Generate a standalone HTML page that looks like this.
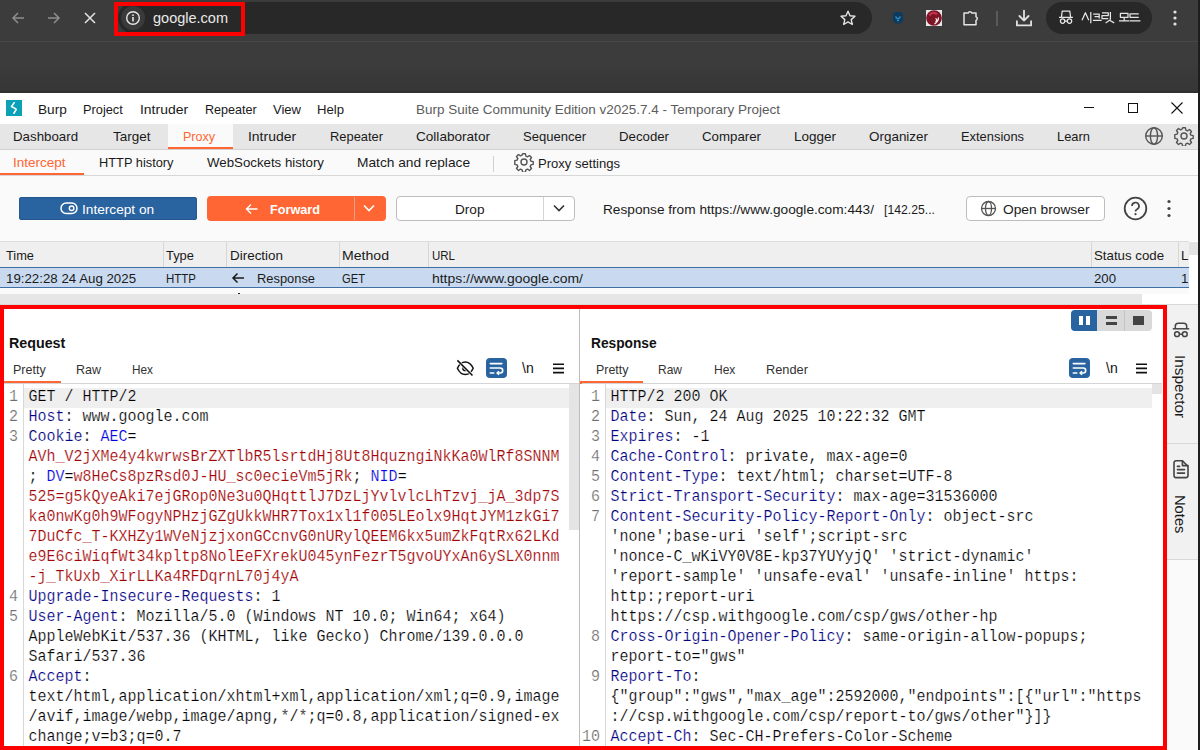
<!DOCTYPE html><html><head><meta charset="utf-8"><title>Burp Suite</title><style>
html,body{margin:0;padding:0;width:1200px;height:750px;overflow:hidden;background:#fafafa;font-family:'Liberation Sans',sans-serif}
.t{position:absolute;white-space:pre}
</style></head><body>
<div style="position:absolute;left:0px;top:0px;width:1200px;height:93px;background:#3c3c3c;"></div>
<div style="position:absolute;left:0px;top:41px;width:1200px;height:1px;background:#474747;"></div>
<div style="position:absolute;left:0px;top:62px;width:1200px;height:29px;background:linear-gradient(#3c3c3c,#363636);"></div>
<div style="position:absolute;left:0px;top:91px;width:1200px;height:2px;background:#303030;"></div>
<div style="position:absolute;left:118px;top:2px;width:754px;height:32px;background:#282828;border-radius:16px;"></div>
<div style="position:absolute;left:121px;top:6px;width:24px;height:24px;border-radius:12px;background:#3a3a3a"></div>
<svg style="position:absolute;left:125px;top:10px;" width="16" height="16" viewBox="0 0 16 16"><circle cx="8" cy="8" r="6.3" fill="none" stroke="#e6e6e6" stroke-width="1.4"/><rect x="7.2" y="7" width="1.6" height="4.5" fill="#e6e6e6"/><rect x="7.2" y="4.4" width="1.6" height="1.6" fill="#e6e6e6"/></svg>
<div class="t" style="left:152.90px;top:10.93px;font-size:14.5px;line-height:14.5px;color:#e8e8e8;font-weight:normal;transform-origin:0 0;transform:scaleX(1.0005);">google.com</div>
<div style="position:absolute;left:114px;top:2px;width:123px;height:26px;border:4px solid #ff0000"></div>
<svg style="position:absolute;left:10px;top:10px;" width="16" height="16" viewBox="0 0 16 16"><path d="M14 8H3M8 3L3 8l5 5" fill="none" stroke="#8d8d8d" stroke-width="1.5"/></svg>
<svg style="position:absolute;left:46px;top:10px;" width="16" height="16" viewBox="0 0 16 16"><path d="M2 8h11M8 3l5 5-5 5" fill="none" stroke="#8d8d8d" stroke-width="1.5"/></svg>
<svg style="position:absolute;left:82px;top:10px;" width="16" height="16" viewBox="0 0 16 16"><path d="M3 3l10 10M13 3L3 13" fill="none" stroke="#e3e3e3" stroke-width="1.5"/></svg>
<svg style="position:absolute;left:839px;top:9px;" width="18" height="18" viewBox="0 0 18 18"><path d="M9 2.2l2 4.6 5 .5-3.8 3.3 1.1 4.9L9 12.9l-4.3 2.6 1.1-4.9L2 7.3l5-.5z" fill="none" stroke="#e3e3e3" stroke-width="1.4" stroke-linejoin="round"/></svg>
<svg style="position:absolute;left:890px;top:10px;" width="16" height="16" viewBox="0 0 16 16"><path d="M3 3.5L5.5 2H10.5L13 3.5V11L10.5 13.5H5.5L3 11Z" fill="#0d3b5e"/><path d="M5.5 6.5L7 8.5H9L10.5 6.5M7 10.5H9" fill="none" stroke="#2f87c0" stroke-width="1.3"/></svg>
<svg style="position:absolute;left:925px;top:9px;" width="18" height="18" viewBox="0 0 18 18"><rect x="1" y="1" width="16" height="16" fill="#e8e8e8"/><circle cx="9" cy="9" r="7.8" fill="#7e1424"/><path d="M4.5 6.5C6 3.5 10 3 12 5.5" fill="none" stroke="#c2324e" stroke-width="2.2"/><path d="M13.5 8.5C13.5 12 11 14 9.5 15M10.5 9.5C12 10 12 12 10.5 13" fill="none" stroke="#f4f4f4" stroke-width="1.3"/></svg>
<svg style="position:absolute;left:961px;top:9px;" width="18" height="18" viewBox="0 0 18 18"><path d="M3 4H7.2A1.9 1.9 0 0 1 10.8 4H15V7.8A1.9 1.9 0 0 1 15 11.4V15.8H3V11.4A0 0 0 0 0 3 11.4Z" fill="none" stroke="#e3e3e3" stroke-width="1.5" stroke-linejoin="round"/></svg>
<div style="position:absolute;left:996px;top:11px;width:1.5px;height:15px;background:#5a5a5a;"></div>
<svg style="position:absolute;left:1014px;top:8px;" width="20" height="20" viewBox="0 0 20 20"><path d="M10 2.6V12.5M5.4 8L10 12.6L14.6 8M2.9 13.2V17.4H17.1V13.2" fill="none" stroke="#e0e0e0" stroke-width="1.8" stroke-linecap="round" stroke-linejoin="round"/></svg>
<div style="position:absolute;left:1046px;top:2px;width:106px;height:32px;background:#282828;border-radius:16px;"></div>
<svg style="position:absolute;left:1050px;top:4px;" width="100" height="28" viewBox="0 0 100 28"><g fill="none" stroke="#e6e6e6" stroke-width="1.25" stroke-linejoin="round"><path d="M9 13.3H22.9M11.4 13.3L12.2 7.2H19.8L20.6 13.3"/><circle cx="12.6" cy="17.1" r="2.2"/><circle cx="19.5" cy="17.1" r="2.2"/><path d="M14.8 17.1H17.3"/><path d="M32 16.25L35.4 8.75L38.75 16.25M40.8 8V19.2"/><path d="M43.2 10.2H49.2V14.6M44.5 12.5H49M42.9 16.25H51.7"/><path d="M52 8.75H58.3V11.6H52V14.6H58.3M60.4 8V15.8M55.6 18.9L59.6 16.25L64.2 18.9"/><path d="M70.4 9.3H78V13.3H70.4ZM74.2 13.3V16.9M69 16.9H79.2"/><path d="M88.75 9.8H80V13.3H88.75M79.6 16.9H90.4"/></g></svg>
<svg style="position:absolute;left:1169px;top:9px;" width="12" height="18" viewBox="0 0 12 18"><circle cx="6" cy="3" r="1.6" fill="#e3e3e3"/><circle cx="6" cy="9" r="1.6" fill="#e3e3e3"/><circle cx="6" cy="15" r="1.6" fill="#e3e3e3"/></svg>
<div style="position:absolute;left:0px;top:93px;width:1200px;height:31px;background:#ffffff;"></div>
<svg style="position:absolute;left:6px;top:100px;" width="16" height="16" viewBox="0 0 16 16"><rect width="16" height="16" fill="#0ca1b6"/><path d="M8.2 2.6L5.4 6.6L7.8 7.7L10.3 9.4L7.9 13.2" fill="none" stroke="#ffffff" stroke-width="1.6" stroke-linejoin="round" stroke-linecap="round"/></svg>
<div class="t" style="left:38.25px;top:103.00px;font-size:13px;line-height:13px;color:#1a1a1a;font-weight:normal;transform-origin:0 0;transform:scaleX(1.0481);">Burp</div>
<div class="t" style="left:83.25px;top:103.00px;font-size:13px;line-height:13px;color:#1a1a1a;font-weight:normal;transform-origin:0 0;transform:scaleX(0.9832);">Project</div>
<div class="t" style="left:139.50px;top:103.00px;font-size:13px;line-height:13px;color:#1a1a1a;font-weight:normal;transform-origin:0 0;transform:scaleX(1.0718);">Intruder</div>
<div class="t" style="left:204.50px;top:103.00px;font-size:13px;line-height:13px;color:#1a1a1a;font-weight:normal;transform-origin:0 0;transform:scaleX(0.9674);">Repeater</div>
<div class="t" style="left:273.00px;top:103.00px;font-size:13px;line-height:13px;color:#1a1a1a;font-weight:normal;transform-origin:0 0;transform:scaleX(1.0018);">View</div>
<div class="t" style="left:317.00px;top:103.00px;font-size:13px;line-height:13px;color:#1a1a1a;font-weight:normal;transform-origin:0 0;transform:scaleX(1.0107);">Help</div>
<div class="t" style="left:416.00px;top:103.00px;font-size:13px;line-height:13px;color:#5c5c5c;font-weight:normal;transform-origin:0 0;transform:scaleX(1.0372);">Burp Suite Community Edition v2025.7.4 - Temporary Project</div>
<div style="position:absolute;left:1084px;top:107px;width:10px;height:1px;background:#111;"></div>
<div style="position:absolute;left:1128px;top:102.5px;width:8px;height:8px;border:1.2px solid #111"></div>
<svg style="position:absolute;left:1170px;top:101px;" width="14" height="14" viewBox="0 0 14 14"><path d="M1.5 1.5l11 11M12.5 1.5l-11 11" stroke="#111" stroke-width="1.1"/></svg>
<div style="position:absolute;left:0px;top:124px;width:1200px;height:25px;background:#e6e6e6;"></div>
<div style="position:absolute;left:0px;top:149px;width:1200px;height:1px;background:#d2d2d2;"></div>
<div style="position:absolute;left:168px;top:124px;width:65px;height:25px;background:#fafafa;"></div>
<div style="position:absolute;left:168px;top:147px;width:65px;height:2px;background:#ff6633;"></div>
<div class="t" style="left:13.25px;top:130.00px;font-size:13px;line-height:13px;color:#1a1a1a;font-weight:normal;transform-origin:0 0;transform:scaleX(1.0225);">Dashboard</div>
<div class="t" style="left:112.50px;top:130.00px;font-size:13px;line-height:13px;color:#1a1a1a;font-weight:normal;transform-origin:0 0;transform:scaleX(1.0376);">Target</div>
<div class="t" style="left:183.00px;top:130.00px;font-size:13px;line-height:13px;color:#ff6633;font-weight:normal;transform-origin:0 0;transform:scaleX(0.9634);">Proxy</div>
<div class="t" style="left:248.25px;top:130.00px;font-size:13px;line-height:13px;color:#1a1a1a;font-weight:normal;transform-origin:0 0;transform:scaleX(1.0718);">Intruder</div>
<div class="t" style="left:330.00px;top:130.00px;font-size:13px;line-height:13px;color:#1a1a1a;font-weight:normal;transform-origin:0 0;transform:scaleX(0.9907);">Repeater</div>
<div class="t" style="left:416.00px;top:130.00px;font-size:13px;line-height:13px;color:#1a1a1a;font-weight:normal;transform-origin:0 0;transform:scaleX(1.0445);">Collaborator</div>
<div class="t" style="left:523.00px;top:130.00px;font-size:13px;line-height:13px;color:#1a1a1a;font-weight:normal;transform-origin:0 0;transform:scaleX(1.0023);">Sequencer</div>
<div class="t" style="left:619.00px;top:130.00px;font-size:13px;line-height:13px;color:#1a1a1a;font-weight:normal;transform-origin:0 0;transform:scaleX(1.0175);">Decoder</div>
<div class="t" style="left:702.00px;top:130.00px;font-size:13px;line-height:13px;color:#1a1a1a;font-weight:normal;transform-origin:0 0;transform:scaleX(1.0210);">Comparer</div>
<div class="t" style="left:794.00px;top:130.00px;font-size:13px;line-height:13px;color:#1a1a1a;font-weight:normal;transform-origin:0 0;transform:scaleX(1.0372);">Logger</div>
<div class="t" style="left:869.00px;top:130.00px;font-size:13px;line-height:13px;color:#1a1a1a;font-weight:normal;transform-origin:0 0;transform:scaleX(1.0338);">Organizer</div>
<div class="t" style="left:961.00px;top:130.00px;font-size:13px;line-height:13px;color:#1a1a1a;font-weight:normal;transform-origin:0 0;transform:scaleX(0.9910);">Extensions</div>
<div class="t" style="left:1057.00px;top:130.00px;font-size:13px;line-height:13px;color:#1a1a1a;font-weight:normal;transform-origin:0 0;transform:scaleX(0.9916);">Learn</div>
<svg style="position:absolute;left:1144px;top:126px;" width="20" height="20" viewBox="0 0 20 20"><g fill="none" stroke="#555" stroke-width="1.4"><circle cx="10" cy="10" r="8.3"/><ellipse cx="10" cy="10" rx="3.6" ry="8.3"/><path d="M1.7 10h16.6"/></g></svg>
<svg style="position:absolute;left:1174px;top:126px;" width="20" height="20" viewBox="0 0 20 20"><g fill="none" stroke="#555" stroke-width="1.4"><path d="M8.6 1.8h2.8l.5 2.3 1.6.7 2-1.3 2 2-1.3 2 .7 1.6 2.3.5v2.8l-2.3.5-.7 1.6 1.3 2-2 2-2-1.3-1.6.7-.5 2.3H8.6l-.5-2.3-1.6-.7-2 1.3-2-2 1.3-2-.7-1.6-2.3-.5V8.6l2.3-.5.7-1.6-1.3-2 2-2 2 1.3 1.6-.7z" stroke-linejoin="round"/><circle cx="10" cy="10" r="3"/></g></svg>
<div style="position:absolute;left:0px;top:150px;width:1200px;height:25px;background:#fafafa;"></div>
<div style="position:absolute;left:0px;top:175px;width:1200px;height:1px;background:#d8d8d8;"></div>
<div style="position:absolute;left:0px;top:173px;width:84px;height:2px;background:#ff6633;"></div>
<div class="t" style="left:13.25px;top:156.00px;font-size:13px;line-height:13px;color:#ff6633;font-weight:normal;transform-origin:0 0;transform:scaleX(1.0382);">Intercept</div>
<div class="t" style="left:99.25px;top:156.00px;font-size:13px;line-height:13px;color:#1a1a1a;font-weight:normal;transform-origin:0 0;transform:scaleX(0.9855);">HTTP history</div>
<div class="t" style="left:207.00px;top:156.00px;font-size:13px;line-height:13px;color:#1a1a1a;font-weight:normal;transform-origin:0 0;transform:scaleX(1.0204);">WebSockets history</div>
<div class="t" style="left:357.00px;top:156.00px;font-size:13px;line-height:13px;color:#1a1a1a;font-weight:normal;transform-origin:0 0;transform:scaleX(1.0568);">Match and replace</div>
<div class="t" style="left:538.00px;top:156.50px;font-size:13px;line-height:13px;color:#1a1a1a;font-weight:normal;transform-origin:0 0;transform:scaleX(1.0044);">Proxy settings</div>
<div style="position:absolute;left:493px;top:156px;width:1px;height:16px;background:#d0d0d0;"></div>
<svg style="position:absolute;left:514px;top:152px;" width="20" height="20" viewBox="0 0 20 20"><g fill="none" stroke="#555" stroke-width="1.4"><path d="M8.6 1.8h2.8l.5 2.3 1.6.7 2-1.3 2 2-1.3 2 .7 1.6 2.3.5v2.8l-2.3.5-.7 1.6 1.3 2-2 2-2-1.3-1.6.7-.5 2.3H8.6l-.5-2.3-1.6-.7-2 1.3-2-2 1.3-2-.7-1.6-2.3-.5V8.6l2.3-.5.7-1.6-1.3-2 2-2 2 1.3 1.6-.7z" stroke-linejoin="round"/><circle cx="10" cy="10" r="3"/></g></svg>
<div style="position:absolute;left:0px;top:176px;width:1200px;height:65px;background:#fafafa;"></div>
<div style="position:absolute;left:18.5px;top:196.5px;width:176px;height:21.5px;background:#2a64a0;border:1px solid #25578c;border-radius:2px"></div>
<svg style="position:absolute;left:60px;top:202px;" width="18" height="13" viewBox="0 0 18 13"><rect x="1" y="1" width="16" height="10.5" rx="5.25" fill="none" stroke="#fff" stroke-width="1.5"/><circle cx="11.6" cy="6.25" r="2.3" fill="none" stroke="#fff" stroke-width="1.4"/></svg>
<div class="t" style="left:81.90px;top:203.20px;font-size:13px;line-height:13px;color:#ffffff;font-weight:normal;transform-origin:0 0;transform:scaleX(1.0504);">Intercept on</div>
<div style="position:absolute;left:207px;top:196px;width:179px;height:25px;background:#ff6633;border-radius:4px"></div>
<div style="position:absolute;left:354px;top:197px;width:1px;height:23px;background:#d9a692;"></div>
<svg style="position:absolute;left:244px;top:201px;" width="16" height="16" viewBox="0 0 16 16"><path d="M13.5 8H2.5M7 3.5L2.5 8L7 12.5" fill="none" stroke="#fff" stroke-width="1.4"/></svg>
<div class="t" style="left:270.00px;top:203.20px;font-size:13px;line-height:13px;color:#ffffff;font-weight:bold;transform-origin:0 0;transform:scaleX(0.9749);">Forward</div>
<svg style="position:absolute;left:361px;top:201px;" width="16" height="14" viewBox="0 0 16 14"><path d="M3 4.5l5 5 5-5" fill="none" stroke="#fff" stroke-width="1.6"/></svg>
<div style="position:absolute;left:396px;top:196px;width:177px;height:23px;background:#ffffff;border:1px solid #bdbdbd;border-radius:4px"></div>
<div style="position:absolute;left:543px;top:197px;width:1px;height:23px;background:#d4d4d4;"></div>
<div class="t" style="left:455.00px;top:203.20px;font-size:13px;line-height:13px;color:#1a1a1a;font-weight:normal;transform-origin:0 0;transform:scaleX(1.0457);">Drop</div>
<svg style="position:absolute;left:551px;top:201px;" width="16" height="14" viewBox="0 0 16 14"><path d="M3 4.5l5 5 5-5" fill="none" stroke="#333" stroke-width="1.6"/></svg>
<div class="t" style="left:603.00px;top:203.20px;font-size:13px;line-height:13px;color:#1a1a1a;font-weight:normal;transform-origin:0 0;transform:scaleX(1.0504);">Response from https://www.google.com:443/</div>
<div class="t" style="left:884.00px;top:203.20px;font-size:13px;line-height:13px;color:#1a1a1a;font-weight:normal;transform-origin:0 0;transform:scaleX(0.9408);">[142.25...</div>
<div style="position:absolute;left:965.5px;top:196.3px;width:137px;height:22.5px;background:#ffffff;border:1px solid #bdbdbd;border-radius:4px"></div>
<svg style="position:absolute;left:980px;top:200px;" width="17" height="17" viewBox="0 0 17 17"><g fill="none" stroke="#555" stroke-width="1.3"><circle cx="8.5" cy="8.5" r="7"/><ellipse cx="8.5" cy="8.5" rx="3" ry="7"/><path d="M1.5 8.5h14"/></g></svg>
<div class="t" style="left:1003.00px;top:203.20px;font-size:13px;line-height:13px;color:#1a1a1a;font-weight:normal;transform-origin:0 0;transform:scaleX(1.0595);">Open browser</div>
<svg style="position:absolute;left:1123px;top:196px;" width="25" height="25" viewBox="0 0 25 25"><circle cx="12.5" cy="12.5" r="10.8" fill="none" stroke="#444" stroke-width="1.8"/><path d="M9 10a3.5 3.5 0 1 1 5 3.2c-1 .5-1.5 1-1.5 2.3" fill="none" stroke="#444" stroke-width="1.7"/><circle cx="12.5" cy="18.2" r="1.1" fill="#444"/></svg>
<svg style="position:absolute;left:1163px;top:199px;" width="12" height="20" viewBox="0 0 12 20"><circle cx="6" cy="2.5" r="1.6" fill="#444"/><circle cx="6" cy="9.5" r="1.6" fill="#444"/><circle cx="6" cy="16.5" r="1.6" fill="#444"/></svg>
<div style="position:absolute;left:0px;top:241px;width:1189px;height:1px;background:#dcdcdc;"></div>
<div style="position:absolute;left:0px;top:242px;width:1189px;height:25px;background:#efefef;"></div>
<div style="position:absolute;left:162.5px;top:242px;width:1px;height:25px;background:#d6d6d6;"></div>
<div style="position:absolute;left:226px;top:242px;width:1px;height:25px;background:#d6d6d6;"></div>
<div style="position:absolute;left:338.5px;top:242px;width:1px;height:25px;background:#d6d6d6;"></div>
<div style="position:absolute;left:428px;top:242px;width:1px;height:25px;background:#d6d6d6;"></div>
<div style="position:absolute;left:1090.5px;top:242px;width:1px;height:25px;background:#d6d6d6;"></div>
<div style="position:absolute;left:1178px;top:242px;width:1px;height:25px;background:#d6d6d6;"></div>
<div class="t" style="left:6.00px;top:249.00px;font-size:13px;line-height:13px;color:#1a1a1a;font-weight:normal;transform-origin:0 0;transform:scaleX(0.9857);">Time</div>
<div class="t" style="left:166.00px;top:249.00px;font-size:13px;line-height:13px;color:#1a1a1a;font-weight:normal;transform-origin:0 0;transform:scaleX(0.9926);">Type</div>
<div class="t" style="left:230.00px;top:249.00px;font-size:13px;line-height:13px;color:#1a1a1a;font-weight:normal;transform-origin:0 0;transform:scaleX(1.0334);">Direction</div>
<div class="t" style="left:342.00px;top:249.00px;font-size:13px;line-height:13px;color:#1a1a1a;font-weight:normal;transform-origin:0 0;transform:scaleX(1.0841);">Method</div>
<div class="t" style="left:432.00px;top:249.00px;font-size:13px;line-height:13px;color:#1a1a1a;font-weight:normal;transform-origin:0 0;transform:scaleX(0.8846);">URL</div>
<div class="t" style="left:1094.00px;top:249.00px;font-size:13px;line-height:13px;color:#1a1a1a;font-weight:normal;transform-origin:0 0;transform:scaleX(1.0198);">Status code</div>
<div class="t" style="left:1181px;top:249.04px;font-size:13.3px;line-height:13.3px;color:#1a1a1a;font-weight:normal;font-family:'Liberation Sans', sans-serif;">Length</div>
<div style="position:absolute;left:1189px;top:241px;width:11px;height:64px;background:#ffffff;"></div>
<div style="position:absolute;left:1189px;top:242px;width:10px;height:13px;background:#e3e3e3;"></div>
<div style="position:absolute;left:1199px;top:241px;width:1px;height:64px;background:#d8d8d8;"></div>
<div style="position:absolute;left:0px;top:267px;width:1189px;height:1px;background:#3f6fa5;"></div>
<div style="position:absolute;left:0px;top:268px;width:1189px;height:19px;background:#c9daf0;"></div>
<div style="position:absolute;left:0px;top:287px;width:1189px;height:1px;background:#3f6fa5;"></div>
<div class="t" style="left:6.00px;top:272.00px;font-size:13px;line-height:13px;color:#1a1a1a;font-weight:normal;transform-origin:0 0;transform:scaleX(1.0220);">19:22:28 24 Aug 2025</div>
<div class="t" style="left:166.00px;top:272.00px;font-size:13px;line-height:13px;color:#1a1a1a;font-weight:normal;transform-origin:0 0;transform:scaleX(0.8842);">HTTP</div>
<div class="t" style="left:257.00px;top:272.00px;font-size:13px;line-height:13px;color:#1a1a1a;font-weight:normal;transform-origin:0 0;transform:scaleX(0.9904);">Response</div>
<div class="t" style="left:342.00px;top:272.00px;font-size:13px;line-height:13px;color:#1a1a1a;font-weight:normal;transform-origin:0 0;transform:scaleX(0.8609);">GET</div>
<div class="t" style="left:432.00px;top:272.00px;font-size:13px;line-height:13px;color:#1a1a1a;font-weight:normal;transform-origin:0 0;transform:scaleX(1.0715);">https://www.google.com/</div>
<div class="t" style="left:1094.00px;top:272.00px;font-size:13px;line-height:13px;color:#1a1a1a;font-weight:normal;transform-origin:0 0;transform:scaleX(1.0134);">200</div>
<div class="t" style="left:1181px;top:271.74px;font-size:13.3px;line-height:13.3px;color:#1a1a1a;font-weight:normal;font-family:'Liberation Sans', sans-serif;">1</div>
<svg style="position:absolute;left:230px;top:270px;" width="16" height="16" viewBox="0 0 16 16"><path d="M14 8H3M7.5 3.5L3 8l4.5 4.5" fill="none" stroke="#1a1a1a" stroke-width="1.5"/></svg>
<div style="position:absolute;left:0px;top:288px;width:1189px;height:6px;background:#fafafa;"></div>
<div style="position:absolute;left:0px;top:294px;width:1142px;height:10px;background:#e6e6e6;"></div>
<div style="position:absolute;left:1142px;top:294px;width:47px;height:10px;background:#ffffff;"></div>
<div style="position:absolute;left:0px;top:304px;width:1200px;height:1px;background:#d8d8d8;"></div>
<div style="position:absolute;left:238px;top:292.5px;width:2px;height:1.5px;background:#222;"></div>
<div style="position:absolute;left:0px;top:305px;width:1167px;height:445px;background:#ffffff;"></div>
<div style="position:absolute;left:579px;top:305px;width:1px;height:445px;background:#bdbdbd;"></div>
<style>.c{font-family:"Liberation Mono",monospace;font-size:15px;line-height:15px;transform:scaleY(1.15);transform-origin:0 11.5px;-webkit-text-stroke:0.2px #fff}</style>
<div class="t" style="left:8.70px;top:336.35px;font-size:14px;line-height:14px;color:#111;font-weight:bold;transform-origin:0 0;transform:scaleX(1.0194);">Request</div>
<div class="t" style="left:13.30px;top:364.16px;font-size:12.8px;line-height:12.8px;color:#333;font-weight:normal;transform-origin:0 0;transform:scaleX(0.9788);">Pretty</div>
<div class="t" style="left:76.00px;top:364.16px;font-size:12.8px;line-height:12.8px;color:#333;font-weight:normal;transform-origin:0 0;transform:scaleX(0.9741);">Raw</div>
<div class="t" style="left:132.00px;top:364.16px;font-size:12.8px;line-height:12.8px;color:#333;font-weight:normal;transform-origin:0 0;transform:scaleX(0.9217);">Hex</div>
<div style="position:absolute;left:0px;top:381px;width:61px;height:2.5px;background:#ff6633;"></div>
<div style="position:absolute;left:0px;top:383px;width:579px;height:1px;background:#d4d4d4;"></div>
<svg style="position:absolute;left:455px;top:358px;" width="20" height="20" viewBox="0 0 20 20"><defs><clipPath id="ce"><path d="M0 0L20 20H0Z"/></clipPath></defs><g fill="none" stroke="#111" stroke-width="1.5"><path d="M2.4 10.2C4.4 6 7.4 4 10.3 4C13.2 4 16.2 6 18.2 10.2C16.2 14.5 13.2 16.5 10.3 16.5C7.4 16.5 4.4 14.5 2.4 10.2Z"/><circle cx="10.3" cy="10.2" r="2.4" clip-path="url(#ce)"/></g><path d="M2.2 2.2L17.6 17.6" stroke="#fff" stroke-width="2.8"/><path d="M2.4 2.4L17.5 17.5" stroke="#111" stroke-width="1.5"/></svg>
<div style="position:absolute;left:486px;top:358px;width:21px;height:20px;background:#2a64a0;border-radius:4px"></div>
<svg style="position:absolute;left:486px;top:358px;" width="21" height="20" viewBox="0 0 21 20"><g fill="none" stroke="#fff" stroke-width="1.6" stroke-linecap="round"><path d="M4.3 5.6H15.9M4.3 10H14.2A2.5 2.5 0 0 1 14.2 15H11.6M4.3 15H7.8"/><path d="M13 13.2L11.2 15L13 16.8" stroke-linecap="butt"/></g></svg>
<div class="t" style="left:522px;top:361.15px;font-size:14px;line-height:14px;color:#111;font-weight:normal;font-family:'Liberation Sans', sans-serif;">\n</div>
<svg style="position:absolute;left:552px;top:362px;" width="13" height="13" viewBox="0 0 13 13"><path d="M1 2.2h11M1 6.4h11M1 10.6h11" stroke="#111" stroke-width="1.6"/></svg>
<div style="position:absolute;left:22.5px;top:384px;width:1px;height:362px;background:#d8d8d8;"></div>
<div style="position:absolute;left:23.5px;top:387.5px;width:545.5px;height:20.5px;background:#efefef;"></div>
<div style="position:absolute;left:569px;top:384px;width:10px;height:146px;background:#e4e4e4;"></div>
<div class="t" style="left:9.0px;top:389.50px;font-size:15px;line-height:15px;color:#6e6e6e;font-weight:normal;font-family:'Liberation Mono', monospace;transform:scaleY(1.15);transform-origin:0 11.5px;-webkit-text-stroke:0.2px #fff">1</div>
<div class="t c" style="left:28.5px;top:389.50px"><span style="color:#000000">GET / HTTP/2</span></div>
<div class="t" style="left:9.0px;top:409.50px;font-size:15px;line-height:15px;color:#6e6e6e;font-weight:normal;font-family:'Liberation Mono', monospace;transform:scaleY(1.15);transform-origin:0 11.5px;-webkit-text-stroke:0.2px #fff">2</div>
<div class="t c" style="left:28.5px;top:409.50px"><span style="color:#000080">Host</span><span style="color:#000000">: www.google.com</span></div>
<div class="t" style="left:9.0px;top:429.50px;font-size:15px;line-height:15px;color:#6e6e6e;font-weight:normal;font-family:'Liberation Mono', monospace;transform:scaleY(1.15);transform-origin:0 11.5px;-webkit-text-stroke:0.2px #fff">3</div>
<div class="t c" style="left:28.5px;top:429.50px"><span style="color:#000080">Cookie</span><span style="color:#000000">: </span><span style="color:#0000e0">AEC</span><span style="color:#000000">=</span></div>
<div class="t c" style="left:28.5px;top:449.50px"><span style="color:#a00000">AVh_V2jXMe4y4kwrwsBrZXTlbR5lsrtdHj8Ut8HquzngiNkKa0WlRf8SNNM</span></div>
<div class="t c" style="left:28.5px;top:469.50px"><span style="color:#000000">; </span><span style="color:#0000e0">DV</span><span style="color:#000000">=</span><span style="color:#a00000">w8HeCs8pzRsd0J-HU_sc0ecieVm5jRk</span><span style="color:#000000">; </span><span style="color:#0000e0">NID</span><span style="color:#000000">=</span></div>
<div class="t c" style="left:28.5px;top:489.50px"><span style="color:#a00000">525=g5kQyeAki7ejGRop0Ne3u0QHqttlJ7DzLjYvlvlcLhTzvj_jA_3dp7S</span></div>
<div class="t c" style="left:28.5px;top:509.50px"><span style="color:#a00000">ka0nwKg0h9WFogyNPHzjGZgUkkWHR7Tox1xl1f005LEolx9HqtJYM1zkGi7</span></div>
<div class="t c" style="left:28.5px;top:529.50px"><span style="color:#a00000">7DuCfc_T-KXHZy1WVeNjzjxonGCcnvG0nURylQEEM6kx5umZkFqtRx62LKd</span></div>
<div class="t c" style="left:28.5px;top:549.50px"><span style="color:#a00000">e9E6ciWiqfWt34kpltp8NolEeFXrekU045ynFezrT5gvoUYxAn6ySLX0nnm</span></div>
<div class="t c" style="left:28.5px;top:569.50px"><span style="color:#a00000">-j_TkUxb_XirLLKa4RFDqrnL70j4yA</span></div>
<div class="t" style="left:9.0px;top:589.50px;font-size:15px;line-height:15px;color:#6e6e6e;font-weight:normal;font-family:'Liberation Mono', monospace;transform:scaleY(1.15);transform-origin:0 11.5px;-webkit-text-stroke:0.2px #fff">4</div>
<div class="t c" style="left:28.5px;top:589.50px"><span style="color:#000080">Upgrade-Insecure-Requests</span><span style="color:#000000">: 1</span></div>
<div class="t" style="left:9.0px;top:609.50px;font-size:15px;line-height:15px;color:#6e6e6e;font-weight:normal;font-family:'Liberation Mono', monospace;transform:scaleY(1.15);transform-origin:0 11.5px;-webkit-text-stroke:0.2px #fff">5</div>
<div class="t c" style="left:28.5px;top:609.50px"><span style="color:#000080">User-Agent</span><span style="color:#000000">: Mozilla/5.0 (Windows NT 10.0; Win64; x64)</span></div>
<div class="t c" style="left:28.5px;top:629.50px"><span style="color:#000000">AppleWebKit/537.36 (KHTML, like Gecko) Chrome/139.0.0.0</span></div>
<div class="t c" style="left:28.5px;top:649.50px"><span style="color:#000000">Safari/537.36</span></div>
<div class="t" style="left:9.0px;top:669.50px;font-size:15px;line-height:15px;color:#6e6e6e;font-weight:normal;font-family:'Liberation Mono', monospace;transform:scaleY(1.15);transform-origin:0 11.5px;-webkit-text-stroke:0.2px #fff">6</div>
<div class="t c" style="left:28.5px;top:669.50px"><span style="color:#000080">Accept</span><span style="color:#000000">:</span></div>
<div class="t c" style="left:28.5px;top:689.50px"><span style="color:#000000">text/html,application/xhtml+xml,application/xml;q=0.9,image</span></div>
<div class="t c" style="left:28.5px;top:709.50px"><span style="color:#000000">/avif,image/webp,image/apng,*/*;q=0.8,application/signed-ex</span></div>
<div class="t c" style="left:28.5px;top:729.50px"><span style="color:#000000">change;v=b3;q=0.7</span></div>
<div class="t" style="left:590.70px;top:336.35px;font-size:14px;line-height:14px;color:#111;font-weight:bold;transform-origin:0 0;transform:scaleX(0.9803);">Response</div>
<div class="t" style="left:595.60px;top:364.16px;font-size:12.8px;line-height:12.8px;color:#333;font-weight:normal;transform-origin:0 0;transform:scaleX(0.9698);">Pretty</div>
<div class="t" style="left:658.40px;top:364.16px;font-size:12.8px;line-height:12.8px;color:#333;font-weight:normal;transform-origin:0 0;transform:scaleX(0.9352);">Raw</div>
<div class="t" style="left:713.60px;top:364.16px;font-size:12.8px;line-height:12.8px;color:#333;font-weight:normal;transform-origin:0 0;transform:scaleX(0.9393);">Hex</div>
<div class="t" style="left:765.60px;top:364.16px;font-size:12.8px;line-height:12.8px;color:#333;font-weight:normal;transform-origin:0 0;transform:scaleX(1.0004);">Render</div>
<div style="position:absolute;left:580px;top:381px;width:63px;height:2.5px;background:#ff6633;"></div>
<div style="position:absolute;left:582px;top:383px;width:580px;height:1px;background:#d4d4d4;"></div>
<div style="position:absolute;left:1069px;top:358px;width:21px;height:20px;background:#2a64a0;border-radius:4px"></div>
<svg style="position:absolute;left:1069px;top:358px;" width="21" height="20" viewBox="0 0 21 20"><g fill="none" stroke="#fff" stroke-width="1.6" stroke-linecap="round"><path d="M4.3 5.6H15.9M4.3 10H14.2A2.5 2.5 0 0 1 14.2 15H11.6M4.3 15H7.8"/><path d="M13 13.2L11.2 15L13 16.8" stroke-linecap="butt"/></g></svg>
<div class="t" style="left:1106px;top:361.15px;font-size:14px;line-height:14px;color:#111;font-weight:normal;font-family:'Liberation Sans', sans-serif;">\n</div>
<svg style="position:absolute;left:1135px;top:362px;" width="13" height="13" viewBox="0 0 13 13"><path d="M1 2.2h11M1 6.4h11M1 10.6h11" stroke="#111" stroke-width="1.6"/></svg>
<div style="position:absolute;left:604.5px;top:384px;width:1px;height:362px;background:#d8d8d8;"></div>
<div style="position:absolute;left:605.5px;top:387.5px;width:546.5px;height:20.5px;background:#efefef;"></div>
<div style="position:absolute;left:1152px;top:384px;width:10px;height:10px;background:#e4e4e4;"></div>
<div class="t" style="left:591.0px;top:389.50px;font-size:15px;line-height:15px;color:#6e6e6e;font-weight:normal;font-family:'Liberation Mono', monospace;transform:scaleY(1.15);transform-origin:0 11.5px;-webkit-text-stroke:0.2px #fff">1</div>
<div class="t c" style="left:610.5px;top:389.50px"><span style="color:#000000">HTTP/2 200 OK</span></div>
<div class="t" style="left:591.0px;top:409.50px;font-size:15px;line-height:15px;color:#6e6e6e;font-weight:normal;font-family:'Liberation Mono', monospace;transform:scaleY(1.15);transform-origin:0 11.5px;-webkit-text-stroke:0.2px #fff">2</div>
<div class="t c" style="left:610.5px;top:409.50px"><span style="color:#000080">Date</span><span style="color:#000000">: Sun, 24 Aug 2025 10:22:32 GMT</span></div>
<div class="t" style="left:591.0px;top:429.50px;font-size:15px;line-height:15px;color:#6e6e6e;font-weight:normal;font-family:'Liberation Mono', monospace;transform:scaleY(1.15);transform-origin:0 11.5px;-webkit-text-stroke:0.2px #fff">3</div>
<div class="t c" style="left:610.5px;top:429.50px"><span style="color:#000080">Expires</span><span style="color:#000000">: -1</span></div>
<div class="t" style="left:591.0px;top:449.50px;font-size:15px;line-height:15px;color:#6e6e6e;font-weight:normal;font-family:'Liberation Mono', monospace;transform:scaleY(1.15);transform-origin:0 11.5px;-webkit-text-stroke:0.2px #fff">4</div>
<div class="t c" style="left:610.5px;top:449.50px"><span style="color:#000080">Cache-Control</span><span style="color:#000000">: private, max-age=0</span></div>
<div class="t" style="left:591.0px;top:469.50px;font-size:15px;line-height:15px;color:#6e6e6e;font-weight:normal;font-family:'Liberation Mono', monospace;transform:scaleY(1.15);transform-origin:0 11.5px;-webkit-text-stroke:0.2px #fff">5</div>
<div class="t c" style="left:610.5px;top:469.50px"><span style="color:#000080">Content-Type</span><span style="color:#000000">: text/html; charset=UTF-8</span></div>
<div class="t" style="left:591.0px;top:489.50px;font-size:15px;line-height:15px;color:#6e6e6e;font-weight:normal;font-family:'Liberation Mono', monospace;transform:scaleY(1.15);transform-origin:0 11.5px;-webkit-text-stroke:0.2px #fff">6</div>
<div class="t c" style="left:610.5px;top:489.50px"><span style="color:#000080">Strict-Transport-Security</span><span style="color:#000000">: max-age=31536000</span></div>
<div class="t" style="left:591.0px;top:509.50px;font-size:15px;line-height:15px;color:#6e6e6e;font-weight:normal;font-family:'Liberation Mono', monospace;transform:scaleY(1.15);transform-origin:0 11.5px;-webkit-text-stroke:0.2px #fff">7</div>
<div class="t c" style="left:610.5px;top:509.50px"><span style="color:#000080">Content-Security-Policy-Report-Only</span><span style="color:#000000">: object-src</span></div>
<div class="t c" style="left:610.5px;top:529.50px"><span style="color:#000000">&#x27;none&#x27;;base-uri &#x27;self&#x27;;script-src</span></div>
<div class="t c" style="left:610.5px;top:549.50px"><span style="color:#000000">&#x27;nonce-C_wKiVY0V8E-kp37YUYyjQ&#x27; &#x27;strict-dynamic&#x27;</span></div>
<div class="t c" style="left:610.5px;top:569.50px"><span style="color:#000000">&#x27;report-sample&#x27; &#x27;unsafe-eval&#x27; &#x27;unsafe-inline&#x27; https:</span></div>
<div class="t c" style="left:610.5px;top:589.50px"><span style="color:#000000">http:;report-uri</span></div>
<div class="t c" style="left:610.5px;top:609.50px"><span style="color:#000000">https://csp.withgoogle.com/csp/gws/other-hp</span></div>
<div class="t" style="left:591.0px;top:629.50px;font-size:15px;line-height:15px;color:#6e6e6e;font-weight:normal;font-family:'Liberation Mono', monospace;transform:scaleY(1.15);transform-origin:0 11.5px;-webkit-text-stroke:0.2px #fff">8</div>
<div class="t c" style="left:610.5px;top:629.50px"><span style="color:#000080">Cross-Origin-Opener-Policy</span><span style="color:#000000">: same-origin-allow-popups;</span></div>
<div class="t c" style="left:610.5px;top:649.50px"><span style="color:#000000">report-to=&quot;gws&quot;</span></div>
<div class="t" style="left:591.0px;top:669.50px;font-size:15px;line-height:15px;color:#6e6e6e;font-weight:normal;font-family:'Liberation Mono', monospace;transform:scaleY(1.15);transform-origin:0 11.5px;-webkit-text-stroke:0.2px #fff">9</div>
<div class="t c" style="left:610.5px;top:669.50px"><span style="color:#000080">Report-To</span><span style="color:#000000">:</span></div>
<div class="t c" style="left:610.5px;top:689.50px"><span style="color:#000000">{&quot;group&quot;:&quot;gws&quot;,&quot;max_age&quot;:2592000,&quot;endpoints&quot;:[{&quot;url&quot;:&quot;https</span></div>
<div class="t c" style="left:610.5px;top:709.50px"><span style="color:#000000">://csp.withgoogle.com/csp/report-to/gws/other&quot;}]}</span></div>
<div class="t" style="left:582.0px;top:729.50px;font-size:15px;line-height:15px;color:#6e6e6e;font-weight:normal;font-family:'Liberation Mono', monospace;transform:scaleY(1.15);transform-origin:0 11.5px;-webkit-text-stroke:0.2px #fff">10</div>
<div class="t c" style="left:610.5px;top:729.50px"><span style="color:#000080">Accept-Ch</span><span style="color:#000000">: Sec-CH-Prefers-Color-Scheme</span></div>
<div style="position:absolute;left:1071px;top:310px;width:81px;height:21px;background:#d9d9d9;border-radius:4px;overflow:hidden"><div style="position:absolute;left:0;top:0;width:26px;height:21px;background:#2a64a0"></div><div style="position:absolute;left:53px;top:0;width:1px;height:21px;background:#c4c4c4"></div></div>
<div style="position:absolute;left:1078.5px;top:315.5px;width:4px;height:9.5px;background:#fff;"></div>
<div style="position:absolute;left:1086px;top:315.5px;width:4px;height:9.5px;background:#fff;"></div>
<div style="position:absolute;left:1106px;top:315.5px;width:11px;height:3.2px;background:#444;"></div>
<div style="position:absolute;left:1106px;top:321.8px;width:11px;height:3.2px;background:#444;"></div>
<div style="position:absolute;left:1133px;top:315.5px;width:11px;height:9.5px;background:#444;"></div>
<div style="position:absolute;left:0;top:305px;width:1159px;height:437px;border:4px solid #ff0000"></div>
<div style="position:absolute;left:1167px;top:305px;width:33px;height:255px;background:#f2f1f2;"></div>
<div style="position:absolute;left:1167px;top:560px;width:33px;height:190px;background:#fafafa;"></div>
<div style="position:absolute;left:1167px;top:443px;width:32px;height:1px;background:#d8d8d8;"></div>
<div style="position:absolute;left:1167px;top:559px;width:32px;height:1px;background:#d8d8d8;"></div>
<svg style="position:absolute;left:1172px;top:321px;" width="18" height="18" viewBox="0 0 18 18"><g fill="none" stroke="#444" stroke-width="1.5"><path d="M0.8 7.8H17.2"/><path d="M3.3 7.8V5.2Q3.3 2.2 6.3 2.2H11.7Q14.7 2.2 14.7 5.2V7.8"/><circle cx="5" cy="13.2" r="2.4"/><circle cx="12.8" cy="13.2" r="2.4"/><path d="M7.4 13.2H10.4"/></g></svg>
<div class="t" style="left:1187.05px;top:355.30px;font-size:14px;line-height:14px;color:#1a1a1a;transform-origin:0 0;transform:rotate(90deg) scaleX(1.0953)">Inspector</div>
<svg style="position:absolute;left:1172px;top:459px;" width="18" height="20" viewBox="0 0 18 20"><g fill="none" stroke="#444" stroke-width="1.6" stroke-linejoin="round" stroke-linecap="round"><path d="M4 1.8H10.4L16 7.4V16.6A2 2 0 0 1 14 18.6H4A2 2 0 0 1 2 16.6V3.8A2 2 0 0 1 4 1.8Z"/><path d="M10.4 1.8V6.6H16"/><path d="M5.4 7.4H7.6M5.4 10.6H12.6M5.4 14.1H12.6"/></g></svg>
<div class="t" style="left:1187.05px;top:494.60px;font-size:14px;line-height:14px;color:#1a1a1a;transform-origin:0 0;transform:rotate(90deg) scaleX(1.0509)">Notes</div>
<div style="position:absolute;left:1198px;top:0px;width:2px;height:750px;background:#1e1e1e;"></div>
</body></html>
